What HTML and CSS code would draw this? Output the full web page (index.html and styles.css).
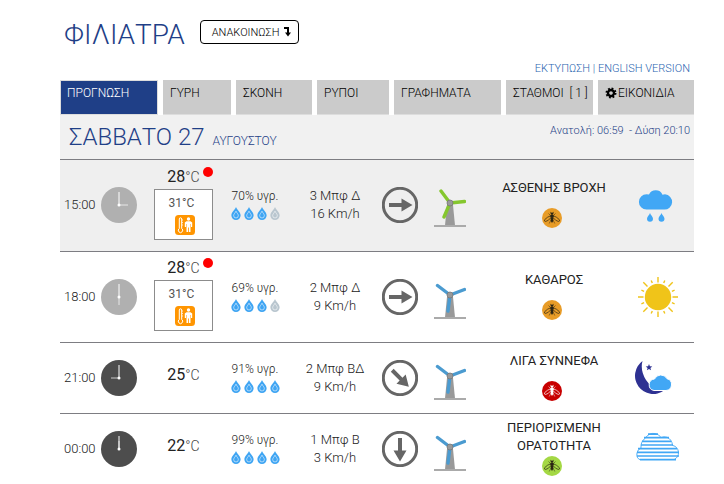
FILE: index.html
```
<!DOCTYPE html>
<html lang="el">
<head>
  <meta charset="UTF-8">
  <meta name="viewport" content="width=device-width, initial-scale=1">
  <title>Φιλιατρά - Πρόγνωση καιρού</title>
  <link rel="stylesheet" href="styles.css">
</head>
<body>

  <!-- icons -->
  <svg class="sprite" aria-hidden="true">
    <symbol id="drop" viewBox="0 0 10 14">
      <path d="M5 0C4 3 0 5.500 0 9a5 5 0 0 0 10 0C10 5.500 6 3 5 0z" fill="currentColor"/>
      <path d="M5 4.500C4.500 6 2.500 7.500 2.500 9.300a2.500 2.500 0 0 0 5 0C7.500 7.500 5.500 6 5 4.500z" fill="none" stroke="#fff" stroke-opacity=".6" stroke-width="1"/>
    </symbol>
    <symbol id="arrow" viewBox="-18 -18 36 36">
      <path d="M-11-2H1.500V-6.500L12.500 0 1.500 6.500V2H-11z" fill="#666"/>
    </symbol>
    <symbol id="tower" viewBox="0 0 32 46">
      <path d="M13 23h6l2 20.500H11z" fill="#999"/>
      <path d="M0 44h32" stroke="#aaa" stroke-width="2"/>
    </symbol>
    <symbol id="mill-blue" viewBox="0 0 32 46">
      <use href="#tower"/>
      <path d="M16 21L3.500 11.500M16 21l14.500-5.500M16 21l-2 16" stroke="#4b9bd0" stroke-width="3.400" stroke-linecap="round"/>
      <circle cx="16" cy="21" r="3" fill="#999" stroke="#777" stroke-width=".8"/>
    </symbol>
    <symbol id="mill-green" viewBox="0 0 32 46">
      <use href="#tower"/>
      <path d="M16 21L7 9M16 21l14.500-1.500M16 21l-6 14" stroke="#85c72e" stroke-width="3.400" stroke-linecap="round"/>
      <circle cx="16" cy="21" r="3" fill="#999" stroke="#777" stroke-width=".8"/>
    </symbol>
    <symbol id="heat" viewBox="0 0 20 20">
      <rect width="20" height="20" rx="3.500" fill="#ff9500"/>
      <path d="M4.300 4a1.200 1.200 0 0 1 2.400 0v9.500a2.200 2.200 0 1 1-2.400 0z" fill="none" stroke="#fff" stroke-width="1"/>
      <path d="M7 5h1M7 7.500h1M7 10h1" stroke="#fff" stroke-width=".7"/>
      <circle cx="13.500" cy="4" r="1.700" fill="#fff"/>
      <path d="M11.500 6.200h4l1.700 1.300v4.500h-1.200V9h-.5v8h-1.600v-4.500h-.8V17h-1.600V9H11v3H9.800V7.500z" fill="#fff"/>
    </symbol>
    <symbol id="bug" viewBox="0 0 20 20">
      <circle cx="10" cy="10" r="10" fill="currentColor"/>
      <g class="bug-body">
        <path d="M9.200 7.500Q5 9 2.800 11.500q-1 2 .7 2Q6.500 13 9 9.500M10.800 7.500Q15 9 17.200 11.500q1 2-.7 2Q13.500 13 11 9.500" fill="none" stroke-width=".7"/>
        <path d="M9.300 5L8 4M10.700 5L12 4M8.500 7.500L6.500 5.500M11.500 7.500l2-2M9 12l-1.800 3.500M11 12l1.800 3.500" fill="none" stroke-width=".5"/>
        <ellipse cx="10" cy="5.500" rx="1.500" ry="1.100" stroke="none"/>
        <ellipse cx="10" cy="8.200" rx="1.700" ry="1.900" stroke="none"/>
        <path d="M8.600 9.700h2.800q.4 3-1.400 5.300-1.800-2.300-1.400-5.300z" stroke="none"/>
      </g>
    </symbol>
    <symbol id="gear" viewBox="-6 -6 12 12">
      <circle r="3" fill="none" stroke="#000" stroke-width="2.400"/>
      <circle r="4.500" fill="none" stroke="#000" stroke-width="2" stroke-dasharray="1.800 1.734"/>
    </symbol>
  </svg>

  <div class="page">

    <header class="top">
      <h1>ΦΙΛΙΑΤΡΑ</h1>
      <button type="button" class="notice">
        ΑΝΑΚΟΙΝΩΣΗ
        <svg width="7" height="10" viewBox="0 0 7 10"><path d="M0 1h4v5" fill="none" stroke="#000" stroke-width="2"/><path d="M1 5.500h6L4 9.500z"/></svg>
      </button>
    </header>

    <div class="links"><a href="#print">ΕΚΤΥΠΩΣΗ</a> | <a href="#en">ENGLISH VERSION</a></div>

    <nav class="tabs">
      <a href="#forecast" class="active">ΠΡΟΓΝΩΣΗ</a>
      <a href="#pollen">ΓΥΡΗ</a>
      <a href="#dust">ΣΚΟΝΗ</a>
      <a href="#pollution">ΡΥΠΟΙ</a>
      <a href="#charts">ΓΡΑΦΗΜΑΤΑ</a>
      <a href="#stations">ΣΤΑΘΜΟΙ&nbsp; [ 1 ]</a>
      <a href="#icons"><svg class="gear"><use href="#gear"/></svg>ΕΙΚΟΝΙΔΙΑ</a>
    </nav>

    <div class="day">
      <h2>ΣΑΒΒΑΤΟ 27 <small>ΑΥΓΟΥΣΤΟΥ</small></h2>
      <p>Ανατολή: 06:59 &nbsp;- Δύση 20:10</p>
    </div>

    <table class="forecast">
      <colgroup>
        <col class="col-time"><col class="col-temp"><col class="col-hum"><col class="col-wind">
        <col class="col-dir"><col class="col-desc"><col class="col-sky">
      </colgroup>
      <tbody>
        <tr class="now">
          <td>
            <div class="time">15:00
              <svg class="clock light" viewBox="-18 -18 36 36"><circle r="18"/><path class="hour" d="M0 0h9"/><path d="M0 1v-14"/><circle class="pin" r="1.500"/></svg>
            </div>
          </td>
          <td>
            <div class="temp hot">28<span>°C</span></div>
            <div class="feels">31°C<svg><use href="#heat"/></svg></div>
          </td>
          <td>
            <div class="hum">70% υγρ.</div>
            <div class="drops"><svg><use href="#drop"/></svg><svg><use href="#drop"/></svg><svg><use href="#drop"/></svg><svg class="off"><use href="#drop"/></svg></div>
          </td>
          <td class="wind">3 Μπφ Δ<br>16 Km/h</td>
          <td>
            <div class="dir">
              <svg class="compass" viewBox="-18 -18 36 36"><circle r="16.700"/><use href="#arrow" x="-18" y="-18" width="36" height="36"/></svg>
              <svg class="mill"><use href="#mill-green"/></svg>
            </div>
          </td>
          <td>
            <div class="desc"><span>ΑΣΘΕΝΗΣ ΒΡΟΧΗ</span><svg class="bug medium"><use href="#bug"/></svg></div>
          </td>
          <td>
            <svg class="sky" viewBox="0 0 48 48">
              <path d="M13.500 28.500a7.600 7.600 0 0 1 0-15.200q1.500 0 2.500.2a7.500 7.500 0 0 1 13.500.200q1-.4 2.500-.4a7.600 7.600 0 0 1-1 15.200z" fill="#41a7f5"/>
              <path d="M17 32c-.5 2-3 3.500-3 5.700a3 3 0 0 0 6 0c0-2.200-2.500-3.700-3-5.700zM28.500 32c-.5 2-3 3.500-3 5.700a3 3 0 0 0 6 0c0-2.200-2.500-3.700-3-5.700z" fill="#41a7f5"/>
            </svg>
          </td>
        </tr>
        <tr>
          <td>
            <div class="time">18:00
              <svg class="clock light" viewBox="-18 -18 36 36"><circle r="18"/><path class="hour" d="M0 0v8"/><path d="M0 1v-14"/><circle class="pin" r="1.500"/></svg>
            </div>
          </td>
          <td>
            <div class="temp hot">28<span>°C</span></div>
            <div class="feels">31°C<svg><use href="#heat"/></svg></div>
          </td>
          <td>
            <div class="hum">69% υγρ.</div>
            <div class="drops"><svg><use href="#drop"/></svg><svg><use href="#drop"/></svg><svg><use href="#drop"/></svg><svg class="off"><use href="#drop"/></svg></div>
          </td>
          <td class="wind">2 Μπφ Δ<br>9 Km/h</td>
          <td>
            <div class="dir">
              <svg class="compass" viewBox="-18 -18 36 36"><circle r="16.700"/><use href="#arrow" x="-18" y="-18" width="36" height="36"/></svg>
              <svg class="mill"><use href="#mill-blue"/></svg>
            </div>
          </td>
          <td>
            <div class="desc"><span>ΚΑΘΑΡΟΣ</span><svg class="bug medium"><use href="#bug"/></svg></div>
          </td>
          <td>
            <svg class="sky" viewBox="-25 -24 48 48">
              <circle r="13.200" fill="#f0c419"/>
              <g stroke="#f0c419" stroke-width="1.400">
                <path d="M0-14.500V-20M14.500 0H20M0 14.500V20M-14.500 0H-20M10.500-10.500l4.200-4.200M10.500 10.500l4.200 4.200M-10.500 10.500l-4.200 4.200M-10.500-10.500l-4.200-4.200"/>
                <path d="M5.700-13.900l1.100-2.700M13.900-5.700l2.700-1.100M13.900 5.700l2.700 1.100M5.700 13.900l1.100 2.700M-5.700 13.900l-1.100 2.700M-13.900 5.700l-2.700 1.100M-13.900-5.700l-2.700-1.100M-5.700-13.900l-1.100-2.700"/>
              </g>
            </svg>
          </td>
        </tr>
        <tr>
          <td>
            <div class="time">21:00
              <svg class="clock" viewBox="-18 -18 36 36"><circle r="18"/><path class="hour" d="M0 0h-8"/><path d="M0 1v-14"/><circle class="pin" r="1.500"/></svg>
            </div>
          </td>
          <td><div class="temp">25<span>°C</span></div></td>
          <td>
            <div class="hum">91% υγρ.</div>
            <div class="drops"><svg><use href="#drop"/></svg><svg><use href="#drop"/></svg><svg><use href="#drop"/></svg><svg><use href="#drop"/></svg></div>
          </td>
          <td class="wind">2 Μπφ ΒΔ<br>9 Km/h</td>
          <td>
            <div class="dir">
              <svg class="compass" viewBox="-18 -18 36 36"><circle r="16.700"/><use href="#arrow" x="-18" y="-18" width="36" height="36" transform="rotate(45)"/></svg>
              <svg class="mill"><use href="#mill-blue"/></svg>
            </div>
          </td>
          <td>
            <div class="desc"><span>ΛΙΓΑ ΣΥΝΝΕΦΑ</span><svg class="bug high"><use href="#bug"/></svg></div>
          </td>
          <td>
            <svg class="sky" viewBox="0 0 48 48">
              <path d="M9.500 7A17.300 17.300 0 1 0 31 36.500Q20 37 13 26 7 16 9.500 7z" fill="#2e3192"/>
              <path d="M16 10l.9 2.300 2.400.1-1.900 1.500.7 2.400-2.100-1.300-2.100 1.300.7-2.400-1.900-1.500 2.400-.1z" fill="#2e3192"/>
              <path d="M21 36.500a5.800 5.800 0 0 1 .5-11.500A7 7 0 0 1 34 24.700 6 6 0 0 1 33 36.500z" fill="#41a7f5" stroke="#fff" stroke-width="1"/>
            </svg>
          </td>
        </tr>
        <tr>
          <td>
            <div class="time">00:00
              <svg class="clock" viewBox="-18 -18 36 36"><circle r="18"/><path class="hour" d="M0 0v-8"/><path d="M0 1v-14"/><circle class="pin" r="1.500"/></svg>
            </div>
          </td>
          <td><div class="temp">22<span>°C</span></div></td>
          <td>
            <div class="hum">99% υγρ.</div>
            <div class="drops"><svg><use href="#drop"/></svg><svg><use href="#drop"/></svg><svg><use href="#drop"/></svg><svg><use href="#drop"/></svg></div>
          </td>
          <td class="wind">1 Μπφ Β<br>3 Km/h</td>
          <td>
            <div class="dir">
              <svg class="compass" viewBox="-18 -18 36 36"><circle r="16.700"/><use href="#arrow" x="-18" y="-18" width="36" height="36" transform="rotate(90)"/></svg>
              <svg class="mill"><use href="#mill-blue"/></svg>
            </div>
          </td>
          <td>
            <div class="desc"><span>ΠΕΡΙΟΡΙΣΜΕΝΗ ΟΡΑΤΟΤΗΤΑ</span><svg class="bug low"><use href="#bug"/></svg></div>
          </td>
          <td>
            <svg class="sky" viewBox="0 0 48 48">
              <g stroke="#41a7f5" fill="none">
                <path d="M15 9.200h10M11 12.700h25M9 16.300h29M8 20h32M5 23.700h39M4 27.400h42M4 31h42M7 34.700h36" stroke-width="1.700"/>
                <path d="M7 34.700Q3 33 4 28q.5-3.500 4-5-.5-6.500 4-9.500Q16 7.500 22 8.500q4 .7 6 4 3-1.200 6-.2 5 2.200 5.500 8 5.500 1.500 6 7 .2 5-4.500 7.400" stroke-width=".9"/>
              </g>
            </svg>
          </td>
        </tr>
      </tbody>
    </table>

  </div>

</body>
</html>
```
FILE: styles.css
```
* {
  box-sizing: border-box;
}

body {
  margin: 0;
  font-family: Roboto, "Open Sans", sans-serif;
  font-weight: 300;
  font-size: 13px;
  line-height: 18px;
  color: #222;
  background: #fff;
}

h1, h2, p {
  margin: 0;
  font-weight: 300;
}

a {
  color: inherit;
  text-decoration: none;
}

.sprite {
  display: none;
}

.page {
  padding: 16px 30px 0 60px;
}

.top {
  display: flex;
  align-items: flex-start;
  gap: 15px;
  padding-left: 4px;
}

.top h1 {
  font-size: 28px;
  line-height: 38px;
  color: #1f3f87;
}

.notice {
  display: flex;
  align-items: center;
  gap: 5px;
  height: 24px;
  margin-top: 4px;
  padding: 0 7px 0 11px;
  border: 1px solid #000;
  border-radius: 4px;
  background: #fff;
  color: #000;
  font: 300 11px Roboto, sans-serif;
}

.links {
  margin-top: 6px;
  padding: 0 4px 2px 0;
  text-align: right;
  font-size: 11px;
  color: #2c66b0;
}

.tabs {
  display: grid;
  grid-template-columns: 98fr 68fr 76fr 72fr 107fr 87fr 96fr;
  gap: 5px;
}

.tabs a {
  height: 35px;
  padding: 4px 0 0 7px;
  border-bottom: 1px solid #ddd;
  background: #cbcbcb;
  color: #000;
  font-size: 12px;
  white-space: nowrap;
}

.tabs .active {
  padding: 3px 0 0 6px;
  border: 1px solid #ddd;
  background: #1f3f87;
  color: #fff;
}

.gear {
  width: 12px;
  height: 12px;
  margin-right: 1px;
  vertical-align: -2px;
}

.day {
  display: flex;
  justify-content: space-between;
  height: 44px;
  padding: 6px 4px 0 9px;
  background: #f1f1f1;
  color: #1f3f87;
}

.day h2 {
  font-size: 24px;
  line-height: 32px;
}

.day small {
  margin-left: 2px;
  font-size: 12px;
}

.day p {
  font-size: 11px;
  line-height: 20px;
}

.forecast {
  width: 100%;
  table-layout: fixed;
  border-spacing: 0;
}

.col-time { width: 92px; }
.col-temp { width: 63px; }
.col-hum,
.col-wind { width: 80px; }
.col-dir { width: 100px; }
.col-sky { width: 61px; }

.forecast td {
  height: 71px;
  padding: 0;
  border-top: 1px solid #7d7d82;
  text-align: center;
  vertical-align: middle;
}

.now td {
  height: 92px;
  padding-bottom: 1px;
  background: #efefef;
}

.forecast svg {
  display: block;
}

.time {
  display: flex;
  align-items: center;
  gap: 5px;
  padding-left: 4px;
}

.clock {
  width: 36px;
  height: 36px;
  fill: #4d4d4d;
}

.clock.light {
  fill: #b0b0b0;
}

.clock path {
  stroke: #fff;
}

.clock .hour {
  stroke-opacity: .7;
}

.clock .pin {
  fill: #fff;
}

.temp {
  position: relative;
  padding-bottom: 6px;
  font-size: 16px;
  line-height: 20px;
  font-weight: 400;
}

.temp span {
  font-size: 14px;
  font-weight: 300;
  color: #444;
}

.temp.hot {
  padding: 6px 0 2px;
}

.hot::after {
  content: "";
  position: absolute;
  top: 6px;
  right: 2px;
  width: 10px;
  height: 10px;
  border-radius: 50%;
  background: #f00;
}

.feels {
  width: 59px;
  height: 51px;
  margin: 0 auto 11px;
  padding: 4px 4px 0 0;
  border: 1px solid #8c8c8c;
  background: #fff;
  color: #555;
  font-size: 12px;
  font-weight: 400;
}

.feels svg {
  width: 20px;
  height: 20px;
  margin: 3px 0 0 20px;
}

.now .feels {
  margin-bottom: 10px;
}

.hum {
  font-size: 12px;
}

.drops {
  display: flex;
  justify-content: center;
  gap: 3px;
  padding: 2px 0 3px;
  color: #3fa5f3;
}

.drops svg {
  width: 10px;
  height: 13px;
}

.drops .off {
  color: #b9c6cf;
}

.dir {
  display: flex;
  align-items: center;
  gap: 16px;
  padding-left: 7px;
}

.compass {
  width: 36px;
  height: 36px;
}

.compass circle {
  fill: none;
  stroke: #666;
  stroke-width: 3px;
}

.mill {
  width: 32px;
  height: 46px;
}

.desc {
  display: flex;
  flex-direction: column;
  align-items: center;
  gap: 1px;
  padding: 0 20px 3px;
  font-weight: 400;
}

.desc span {
  min-height: 28px;
}

.bug {
  width: 20px;
  height: 20px;
  margin-right: 4px;
  --body: #2b2413;
}

.bug.low { color: #a4d844; }
.bug.medium { color: #e89c27; }
.bug.high {
  color: #c80000;
  --body: #fff;
}

.bug-body {
  fill: var(--body);
  stroke: var(--body);
}

.sky {
  width: 48px;
  height: 48px;
}
```
